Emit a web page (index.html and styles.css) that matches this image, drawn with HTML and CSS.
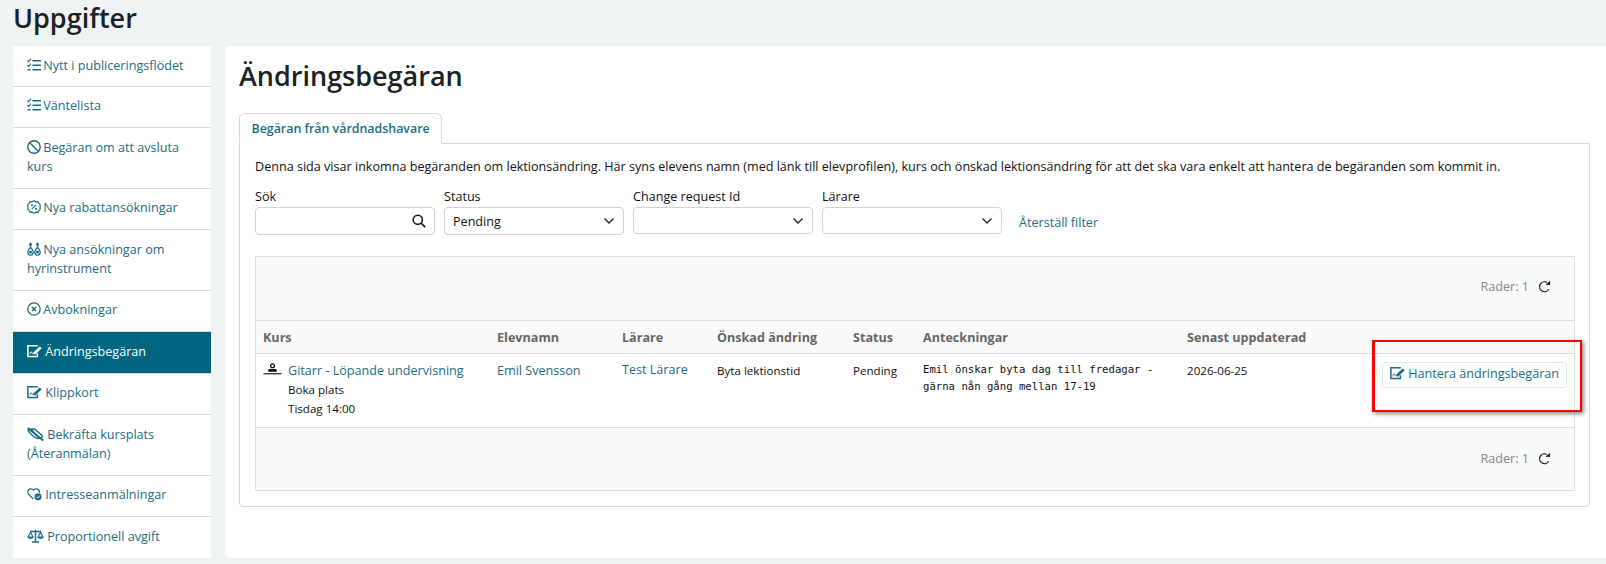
FILE: index.html
```html
<!DOCTYPE html>
<html lang="sv">

<head>
    <meta charset="UTF-8">
    <meta name="viewport" content="width=device-width, initial-scale=1.0">
    <title>Uppgifter</title>
    <link rel="stylesheet" href="styles.css">
</head>

<body>
    <svg class="sprite" width="0" height="0">
        <symbol id="i-list" viewBox="0 0 14 13">
            <path d="M.4 2l1.200 1.200L4 .4M.4 6.700l1.200 1.200L4 5.100" fill="none" stroke="currentColor" stroke-width="1.100"/>
            <path d="M5.500 2.200H14M5.500 6.700H14M5.500 11.200H14M.6 11.200h3" fill="none" stroke="currentColor" stroke-width="1.400"/>
        </symbol>
        <symbol id="i-ban" viewBox="0 0 14 14">
            <circle cx="7" cy="7" r="6.200" fill="none" stroke="currentColor" stroke-width="1.400"/>
            <path d="M2.700 2.700l8.600 8.600" stroke="currentColor" stroke-width="1.400"/>
        </symbol>
        <symbol id="i-percent" viewBox="0 0 14 14">
            <path d="M7 .8l1.800 1 2-.1 1.100 1.700 1.300 1.500L13.100 7l.1 2.100-1.300 1.500-1.100 1.700-2 -.1-1.800 1-1.800-1-2 .1-1.100-1.700L.8 9.100.9 7 .8 4.900l1.300-1.500 1.100-1.700 2 .1z" fill="none" stroke="currentColor" stroke-width="1.200"/>
            <path d="M4.800 9.200l4.400-4.400" stroke="currentColor" stroke-width="1.200"/>
            <circle cx="5" cy="5.200" r="1" fill="currentColor"/>
            <circle cx="9" cy="8.800" r="1" fill="currentColor"/>
        </symbol>
        <symbol id="i-times" viewBox="0 0 14 14">
            <circle cx="7" cy="7" r="6.200" fill="none" stroke="currentColor" stroke-width="1.300"/>
            <path d="M5 5l4 4M9 5l-4 4" stroke="currentColor" stroke-width="1.500"/>
        </symbol>
        <symbol id="i-instrument" viewBox="0 0 14 14">
            <path d="M3.500 .5v5M10.500 .5v5M2 2.500h3M9 2.500h3" stroke="currentColor" stroke-width="1.500"/>
            <path d="M3.500 5.500C1 7.500.5 9 .9 10.800c.3 1.400 1 2.400 2.600 2.400s2.300-1 2.600-2.400C6.500 9 6 7.500 3.500 5.500zM10.500 5.500C8 7.500 7.500 9 7.900 10.800c.3 1.400 1 2.400 2.600 2.400s2.300-1 2.600-2.400C13.500 9 13 7.500 10.500 5.500z" fill="none" stroke="currentColor" stroke-width="1.300"/>
            <circle cx="3.500" cy="10" r="1.500" fill="currentColor"/>
            <circle cx="10.500" cy="10" r="1.500" fill="currentColor"/>
        </symbol>
        <symbol id="i-edit" viewBox="0 0 17 14">
            <path d="M11.500 1.800V1H1v12.200h10.800V9.500" fill="none" stroke="currentColor" stroke-width="1.700"/>
            <path d="M3.200 10.800c1-3.200 1.500-3.800 2.300-1.800.5 1 1 1 2-.2" fill="none" stroke="currentColor" stroke-width="1.100"/>
            <path d="M7.500 8.300L14.300 1.800l2.400 2.200-7 6.700-2.500.4z" fill="currentColor"/>
        </symbol>
        <symbol id="i-noeye" viewBox="0 0 17 14">
            <path d="M.8 3c2.200-1 5-1.300 7.700-.8M16 9.500c-1.800 1.500-4 2.200-6.500 1.800" fill="none" stroke="currentColor" stroke-width="1.500"/>
            <path d="M.8 1l15.400 12.500" stroke="currentColor" stroke-width="2"/>
            <path d="M.8 3c2 3.500 5 6 8.700 8.300M4.500 2.500L11 10M8 2.200L15.500 9" fill="none" stroke="currentColor" stroke-width="1.500"/>
        </symbol>
        <symbol id="i-heart" viewBox="0 0 16 14">
            <path d="M6.800 12.500L1.800 7.300C.2 5.500.7 2.800 2.800 1.800 4.500 1 6 1.700 7 3c1-1.300 2.600-2 4.300-1.200 1.700.8 2.300 2.500 1.900 4" fill="none" stroke="currentColor" stroke-width="1.300"/>
            <circle cx="11.800" cy="10" r="3.800" fill="currentColor"/>
            <path d="M10 10l1.400 1.400 2.200-2.600" fill="none" stroke="#fff" stroke-width="1"/>
        </symbol>
        <symbol id="i-scale" viewBox="0 0 17 14">
            <path d="M8.500 .8v11.700M5 13h7M3 2.500h11" stroke="currentColor" stroke-width="1.400"/>
            <path d="M3.500 3L1 8h5zM13.500 3L11 8h5z" fill="none" stroke="currentColor" stroke-width="1.100"/>
            <path d="M.6 8h5.800c-.4 2.600-5.400 2.600-5.800 0zM10.600 8h5.800c-.4 2.600-5.400 2.600-5.800 0z" fill="currentColor"/>
        </symbol>
        <symbol id="i-search" viewBox="0 0 14 14">
            <circle cx="5.800" cy="5.800" r="4.600" fill="none" stroke="currentColor" stroke-width="1.600"/>
            <path d="M9.200 9.200l4 4" stroke="currentColor" stroke-width="1.800"/>
        </symbol>
        <symbol id="i-chevron" viewBox="0 0 12 8">
            <path d="M1.500 1.500L6 6l4.500-4.500" fill="none" stroke="currentColor" stroke-width="1.300"/>
        </symbol>
        <symbol id="i-refresh" viewBox="0 0 14 14">
            <path d="M11.600 10A5.300 5.300 0 1 1 9.500 2.600" fill="none" stroke="currentColor" stroke-width="1.400"/>
            <path d="M8 5.200L13 5.400 13 .8z" fill="currentColor"/>
        </symbol>
        <symbol id="i-teacher" viewBox="0 0 20 12">
            <circle cx="10" cy="2.600" r="2" fill="none" stroke="currentColor" stroke-width="1.400"/>
            <path d="M5.500 9V7.500C5.500 6.500 6.500 6 7.500 6h5c1 0 2 .5 2 1.500V9z" fill="currentColor"/>
            <path d="M.5 11h19" stroke="currentColor" stroke-width="1.200"/>
        </symbol>
    </svg>

    <h1 class="page-title">Uppgifter</h1>

    <div class="layout">
        <nav class="side-menu">
            <a href="#"><svg class="icon i14"><use href="#i-list"/></svg> Nytt i publiceringsflödet</a>
            <a href="#"><svg class="icon i14"><use href="#i-list"/></svg> Väntelista</a>
            <a href="#"><svg class="icon i14"><use href="#i-ban"/></svg> Begäran om att avsluta kurs</a>
            <a href="#"><svg class="icon i14"><use href="#i-percent"/></svg> Nya rabattansökningar</a>
            <a href="#"><svg class="icon i14"><use href="#i-instrument"/></svg> Nya ansökningar om hyrinstrument</a>
            <a href="#"><svg class="icon i14"><use href="#i-times"/></svg> Avbokningar</a>
            <a href="#" class="active"><svg class="icon i15"><use href="#i-edit"/></svg> Ändringsbegäran</a>
            <a href="#"><svg class="icon i15"><use href="#i-edit"/></svg> Klippkort</a>
            <a href="#"><svg class="icon i17"><use href="#i-noeye"/></svg> Bekräfta kursplats (Återanmälan)</a>
            <a href="#"><svg class="icon i15"><use href="#i-heart"/></svg> Intresseanmälningar</a>
            <a href="#"><svg class="icon i17"><use href="#i-scale"/></svg> Proportionell avgift</a>
        </nav>

        <main class="content">
            <h2 class="content-title">Ändringsbegäran</h2>

            <div class="tabs">
                <a href="#" class="tab">Begäran från vårdnadshavare</a>
            </div>

            <div class="tab-panel">
                <p class="intro">Denna sida visar inkomna begäranden om lektionsändring. Här syns elevens namn (med länk till elevprofilen), kurs och önskad lektionsändring för att det ska vara enkelt att hantera de begäranden som kommit in.</p>

                <div class="filters">
                    <div class="field">
                        <label>Sök</label>
                        <div class="input">
                            <span></span>
                            <svg class="search-icon"><use href="#i-search"/></svg>
                        </div>
                    </div>
                    <div class="field">
                        <label>Status</label>
                        <div class="input">
                            <span>Pending</span>
                            <svg class="chevron"><use href="#i-chevron"/></svg>
                        </div>
                    </div>
                    <div class="field">
                        <label>Change request Id</label>
                        <div class="input short">
                            <span></span>
                            <svg class="chevron"><use href="#i-chevron"/></svg>
                        </div>
                    </div>
                    <div class="field">
                        <label>Lärare</label>
                        <div class="input short">
                            <span></span>
                            <svg class="chevron"><use href="#i-chevron"/></svg>
                        </div>
                    </div>
                    <a href="#" class="reset">Återställ filter</a>
                </div>

                <div class="grid">
                    <div class="grid-bar top">
                        <span>Rader: 1</span>
                        <svg class="refresh"><use href="#i-refresh"/></svg>
                    </div>
                    <table>
                        <thead>
                            <tr>
                                <th class="c-course">Kurs</th>
                                <th class="c-student">Elevnamn</th>
                                <th class="c-teacher">Lärare</th>
                                <th class="c-change">Önskad ändring</th>
                                <th class="c-status">Status</th>
                                <th class="c-notes">Anteckningar</th>
                                <th class="c-updated">Senast uppdaterad</th>
                                <th></th>
                            </tr>
                        </thead>
                        <tbody>
                            <tr>
                                <td>
                                    <div class="course">
                                        <svg class="teacher-icon"><use href="#i-teacher"/></svg>
                                        <div>
                                            <a href="#">Gitarr - Löpande undervisning</a>
                                            <div>Boka plats</div>
                                            <div>Tisdag 14:00</div>
                                        </div>
                                    </div>
                                </td>
                                <td><a href="#">Emil Svensson</a></td>
                                <td class="raised"><a href="#">Test Lärare</a></td>
                                <td>Byta lektionstid</td>
                                <td>Pending</td>
                                <td class="notes">Emil önskar byta dag till fredagar - gärna nån gång mellan 17-19</td>
                                <td>2026-06-25</td>
                                <td class="action">
                                    <a href="#" class="btn"><svg class="icon i15"><use href="#i-edit"/></svg> Hantera ändringsbegäran</a>
                                    <div class="highlight"></div>
                                </td>
                            </tr>
                        </tbody>
                    </table>
                    <div class="grid-bar bottom">
                        <span>Rader: 1</span>
                        <svg class="refresh"><use href="#i-refresh"/></svg>
                    </div>
                </div>
            </div>
        </main>
    </div>
</body>

</html>
```

FILE: styles.css
```css
* {
    box-sizing: border-box;
}

html,
body {
    height: 564px;
    overflow: hidden;
}

body {
    margin: 0;
    background-color: #eff3f4;
    font-family: 'Open Sans', sans-serif;
    font-size: 12.6px;
    line-height: 19px;
    color: #111;
}

a {
    color: #1a6d85;
    text-decoration: none;
}

.sprite {
    position: absolute;
}

.page-title {
    margin: 0;
    padding: 0 13px;
    height: 46px;
    font-size: 27px;
    line-height: 36px;
    font-weight: 600;
    color: #1a2226;
}

.layout {
    display: flex;
    gap: 14px;
    align-items: stretch;
}

/* sidomeny */
.side-menu {
    width: 198px;
    margin-left: 13px;
    background-color: #fff;
    height: 512px;
}

.side-menu a {
    display: block;
    padding: 9.5px 14px 12px;
    border-bottom: 1px solid #d9dcde;
}

.side-menu a:first-child {
    padding-bottom: 11px;
}

.side-menu a:last-child {
    border-bottom: 0;
}

.side-menu a.active {
    background-color: #00657f;
    color: #fff;
}

.icon {
    display: inline-block;
    height: 14px;
    vertical-align: -2px;
}

.i14 {
    width: 14px;
    margin-right: -1px;
}

.i15 {
    width: 15px;
}

.i17 {
    width: 17px;
}

/* innehåll */
.content {
    flex: 1;
    height: 512px;
    padding: 0 16px 0 14px;
    background-color: #fff;
    border-radius: 4px 0 0 4px;
}

.content-title {
    margin: 0;
    padding-top: 13px;
    height: 67px;
    font-size: 27px;
    line-height: 34px;
    font-weight: 600;
    color: #1a2226;
}

.tabs {
    display: flex;
}

.tab {
    display: block;
    height: 31px;
    margin-bottom: -1px;
    padding: 5px 11.5px;
    background-color: #fff;
    border: 1px solid #d5d8da;
    border-bottom-color: #fff;
    border-radius: 6px 6px 0 0;
    font-size: 12.4px;
    font-weight: 600;
    position: relative;
}

.tab-panel {
    height: 364px;
    padding: 13px 14px 0 15px;
    border: 1px solid #d5d8da;
    border-radius: 0 0 4px 4px;
}

.intro {
    margin: 0 0 11px;
}

.filters {
    display: flex;
    gap: 9px;
    align-items: flex-start;
}

.field {
    width: 180px;
}

.field label {
    display: block;
    height: 20px;
}

.input {
    display: flex;
    align-items: center;
    justify-content: space-between;
    height: 28px;
    padding: 0 8px;
    border: 1px solid #cfd3d6;
    border-radius: 4px;
}

.input.short {
    height: 27px;
}

.search-icon {
    width: 14px;
    height: 14px;
    color: #222;
}

.chevron {
    width: 12px;
    height: 8px;
    color: #222;
}

.reset {
    margin: 26px 0 0 8px;
}

.grid {
    margin-top: 21px;
    border: 1px solid #dcdfe1;
    background-color: #fafafa;
}

.grid-bar {
    display: flex;
    align-items: center;
    justify-content: flex-end;
    gap: 9px;
    height: 63px;
    padding: 0 23px 0 0;
    color: #888;
}

.grid-bar.top {
    padding-bottom: 4px;
}

.grid-bar.bottom {
    border-top: 1px solid #dcdfe1;
}

.refresh {
    width: 13px;
    height: 13px;
    color: #222;
}

table {
    width: 100%;
    table-layout: fixed;
    border-collapse: collapse;
}

th {
    height: 33px;
    padding: 0 7px;
    text-align: left;
    font-weight: 700;
    color: #666;
    border-top: 1px solid #dcdfe1;
    border-bottom: 1px solid #dcdfe1;
}

td {
    height: 73px;
    padding: 7px 7px 0;
    vertical-align: top;
    background-color: #fff;
    font-size: 11.6px;
}

td a {
    font-size: 12.6px;
}

td.raised {
    padding-top: 6px;
}

.c-course {
    width: 234px;
}

.c-student {
    width: 125px;
}

.c-teacher {
    width: 95px;
}

.c-change {
    width: 136px;
}

.c-status {
    width: 70px;
}

.c-notes {
    width: 264px;
}

.c-updated {
    width: 196px;
}

.course {
    display: flex;
    gap: 6px;
}

.teacher-icon {
    flex: none;
    width: 19px;
    height: 12px;
    margin-top: 2px;
    color: #111;
}

.notes {
    font-family: 'DejaVu Sans Mono', monospace;
    font-size: 10.64px;
    line-height: 17px;
}

.action {
    position: relative;
    padding: 8px 0 0 6px;
}

.btn {
    display: inline-block;
    height: 26px;
    padding: 1px 7px;
    white-space: nowrap;
    border: 1px solid #dcebf0;
    border-radius: 3px;
    background-color: #fff;
}

.highlight {
    position: absolute;
    left: -4px;
    top: -14px;
    width: 210px;
    height: 72px;
    border: 2px solid #f00;
    border-left-width: 3px;
    box-shadow: 2px 2px 4px rgba(0, 0, 0, 0.45);
}
```
